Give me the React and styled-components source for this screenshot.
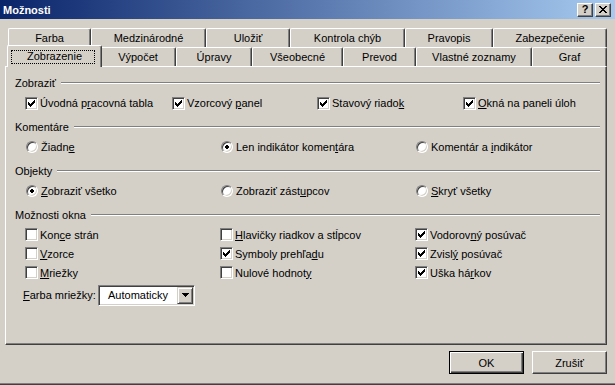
import styled, { createGlobalStyle } from "styled-components";

const GlobalStyle = createGlobalStyle`
  html, body {
    margin: 0;
    padding: 0;
    background: #d4d0c8;
  }
  body {
    font-family: "Liberation Sans", Arial, sans-serif;
    font-size: 11px;
    color: #000;
  }
`;

const Window = styled.div`
  box-sizing: border-box;
  width: 615px;
  height: 385px;
  background: #d4d0c8;
  border-bottom: 1px solid #404040;
  box-shadow: inset 0 -1px #808080;
  display: flex;
  flex-direction: column;
`;

const TitleBar = styled.div`
  height: 19px;
  flex: none;
  display: flex;
  align-items: center;
  padding: 0 4px 0 3px;
  background: linear-gradient(to right, #0a246a, #a6caf0);
  color: #fff;
  font-weight: bold;
  font-size: 11px;
`;

const TitleButtons = styled.div`
  margin-left: auto;
  display: flex;
  gap: 2px;
`;

const TitleButton = styled.div`
  box-sizing: border-box;
  width: 16px;
  height: 14px;
  background: #d4d0c8;
  border: 1px solid;
  border-color: #fff #404040 #404040 #fff;
  box-shadow: inset -1px -1px #808080;
  color: #000;
  font-weight: bold;
  font-size: 11px;
  line-height: 11px;
  display: flex;
  align-items: center;
  justify-content: center;
`;

const PixelSvg = styled.svg`
  display: block;
  flex: none;
`;

const TabStrip = styled.div`
  margin: 9px 0 0 8px;
  width: 599px;
`;

const TabRow = styled.div`
  display: flex;
  height: 19px;
  padding-left: ${(p) => p.$indent || 0}px;
`;

const Tab = styled.div`
  box-sizing: border-box;
  position: relative;
  flex: none;
  width: ${(p) => p.$w + (p.$active ? 4 : 0)}px;
  height: ${(p) => (p.$active ? 22 : 19)}px;
  margin: ${(p) => (p.$active ? "-2px -2px 0" : "0")};
  z-index: ${(p) => (p.$active ? 1 : 0)};
  background: #d4d0c8;
  border-top: 1px solid #fff;
  border-left: 1px solid #fff;
  border-right: 1px solid #404040;
  border-radius: 2px 2px 0 0;
  box-shadow: inset -1px 0 #808080;
  display: flex;
  align-items: center;
  justify-content: center;
  padding-bottom: ${(p) => (p.$active ? 2 : 1)}px;
`;

const FocusRing = styled.span`
  position: absolute;
  top: 4px;
  bottom: 3px;
  left: 3px;
  right: 6px;
  border: 1px dotted #000;
`;

const Panel = styled.div`
  box-sizing: border-box;
  margin-left: 5px;
  width: 602px;
  height: 279px;
  flex: none;
  border: 1px solid;
  border-color: #fff #404040 #404040 #fff;
  box-shadow: inset -1px -1px #808080;
  padding: 6px 6px 0 9px;
`;

const Section = styled.div`
  margin-bottom: 4px;
`;

const GroupHeader = styled.div`
  display: flex;
  align-items: center;
  gap: 5px;
  height: 20px;
`;

const EtchedLine = styled.div`
  flex: 1;
  height: 0;
  border-top: 1px solid #808080;
  border-bottom: 1px solid #fff;
`;

const OptionRow = styled.div`
  display: grid;
  grid-template-columns: ${(p) => p.$cols};
  align-items: center;
  height: ${(p) => p.$h || 20}px;
  padding-left: 10px;
`;

const Option = styled.label`
  display: flex;
  align-items: center;
  gap: 2px;
  white-space: nowrap;
`;

const CheckBox = styled.span`
  box-sizing: border-box;
  width: 13px;
  height: 13px;
  flex: none;
  background: #fff;
  border: 1px solid;
  border-color: #808080 #fff #fff #808080;
  box-shadow: inset 1px 1px #404040, inset -1px -1px #d4d0c8;
  display: flex;
  align-items: center;
  justify-content: center;
`;

const RadioCircle = styled.span`
  box-sizing: border-box;
  width: 12px;
  height: 12px;
  flex: none;
  margin: 0 1px 0 1px;
  border-radius: 50%;
  background: #fff;
  border: 1px solid;
  border-color: #808080 #fff #fff #808080;
  box-shadow: inset 1px 1px #404040, inset -1px -1px #d4d0c8;
  display: flex;
  align-items: center;
  justify-content: center;
`;

const Key = styled.u`
  text-decoration-thickness: 1px;
  text-underline-offset: 1px;
`;

const ComboRow = styled.div`
  display: flex;
  align-items: center;
  height: 22px;
  margin-top: 2px;
  padding-left: 8px;
`;

const ComboLabel = styled.span`
  width: 75px;
  flex: none;
`;

const Combo = styled.div`
  box-sizing: border-box;
  width: 97px;
  height: 21px;
  background: #fff;
  border: 1px solid;
  border-color: #808080 #fff #fff #808080;
  box-shadow: inset 1px 1px #404040, inset -1px -1px #d4d0c8;
  padding: 1px;
  display: flex;
  align-items: stretch;
`;

const ComboText = styled.span`
  flex: 1;
  display: flex;
  align-items: center;
  padding-left: 8px;
`;

const ComboButton = styled.span`
  box-sizing: border-box;
  width: 16px;
  background: #d4d0c8;
  border: 1px solid;
  border-color: #d4d0c8 #404040 #404040 #d4d0c8;
  box-shadow: inset 1px 1px #fff, inset -1px -1px #808080;
  display: flex;
  align-items: center;
  justify-content: center;
`;

const Footer = styled.div`
  display: flex;
  justify-content: flex-end;
  gap: 8px;
  padding: 6px 8px 0 0;
`;

const Button = styled.button`
  box-sizing: border-box;
  width: 75px;
  height: 23px;
  padding: 0;
  background: #d4d0c8;
  font: inherit;
  color: #000;
  border: 1px solid;
  border-color: ${(p) => (p.$default ? "#000" : "#fff #404040 #404040 #fff")};
  box-shadow: ${(p) =>
    p.$default
      ? "inset 1px 1px #fff, inset -1px -1px #404040, inset -2px -2px #808080"
      : "inset -1px -1px #808080"};
`;

const CHECK = ["......x", ".....xx", "x...xxx", "xx.xxx.", "xxxxx..", ".xxx...", "..x...."];
const DOT = [".xx.", "xxxx", "xxxx", ".xx."];
const ARROW = ["xxxxxxx", ".xxxxx.", "..xxx..", "...x..."];
const CLOSE = ["xx....xx", ".xx..xx.", "..xxxx..", "...xx...", "..xxxx..", ".xx..xx.", "xx....xx"];

function Pixels({ rows }) {
  const w = rows[0].length;
  const h = rows.length;
  return (
    <PixelSvg width={w} height={h} viewBox={`0 0 ${w} ${h}`} shapeRendering="crispEdges">
      {rows.flatMap((r, y) =>
        [...r].map((c, x) =>
          c === "x" ? <rect key={`${x}-${y}`} x={x} y={y} width="1" height="1" fill="#000" /> : null
        )
      )}
    </PixelSvg>
  );
}

function Check({ on, children }) {
  return (
    <Option>
      <CheckBox>{on && <Pixels rows={CHECK} />}</CheckBox>
      <span>{children}</span>
    </Option>
  );
}

function Radio({ on, children }) {
  return (
    <Option>
      <RadioCircle>{on && <Pixels rows={DOT} />}</RadioCircle>
      <span>{children}</span>
    </Option>
  );
}

const row1 = [
  ["Farba", 83],
  ["Medzinárodné", 115],
  ["Uložiť", 84],
  ["Kontrola chýb", 115],
  ["Pravopis", 88],
  ["Zabezpečenie", 114],
];

const row2 = [
  ["Zobrazenie", 91],
  ["Výpočet", 76],
  ["Úpravy", 76],
  ["Všeobecné", 91],
  ["Prevod", 73],
  ["Vlastné zoznamy", 116],
  ["Graf", 75],
];

const COLS3 = "195px 195px auto";

export default function App() {
  return (
    <>
      <GlobalStyle />
      <Window>
        <TitleBar>
          Možnosti
          <TitleButtons>
            <TitleButton>?</TitleButton>
            <TitleButton>
              <Pixels rows={CLOSE} />
            </TitleButton>
          </TitleButtons>
        </TitleBar>

        <TabStrip>
          <TabRow>
            {row1.map(([name, w]) => (
              <Tab key={name} $w={w}>
                {name}
              </Tab>
            ))}
          </TabRow>
          <TabRow $indent={1}>
            {row2.map(([name, w], i) => (
              <Tab key={name} $w={w} $active={i === 0}>
                {name}
                {i === 0 && <FocusRing />}
              </Tab>
            ))}
          </TabRow>
        </TabStrip>

        <Panel>
          <Section>
            <GroupHeader>
              Zobraziť
              <EtchedLine />
            </GroupHeader>
            <OptionRow $cols="147px 145px 146px auto">
              <Check on>
                Úvodná p<Key>r</Key>acovná tabla
              </Check>
              <Check on>
                Vzorcový <Key>p</Key>anel
              </Check>
              <Check on>
                Stavový riado<Key>k</Key>
              </Check>
              <Check on>
                <Key>O</Key>kná na paneli úloh
              </Check>
            </OptionRow>
          </Section>

          <Section>
            <GroupHeader>
              Komentáre
              <EtchedLine />
            </GroupHeader>
            <OptionRow $cols={COLS3}>
              <Radio>
                Žiadn<Key>e</Key>
              </Radio>
              <Radio on>
                Len indikátor komen<Key>t</Key>ára
              </Radio>
              <Radio>
                Komentár a <Key>i</Key>ndikátor
              </Radio>
            </OptionRow>
          </Section>

          <Section>
            <GroupHeader>
              Objekty
              <EtchedLine />
            </GroupHeader>
            <OptionRow $cols={COLS3}>
              <Radio on>
                <Key>Z</Key>obraziť všetko
              </Radio>
              <Radio>
                Zobraziť zást<Key>u</Key>pcov
              </Radio>
              <Radio>
                <Key>S</Key>kryť všetky
              </Radio>
            </OptionRow>
          </Section>

          <Section>
            <GroupHeader>
              Možnosti okna
              <EtchedLine />
            </GroupHeader>
            <OptionRow $cols={COLS3} $h={19}>
              <Check>
                Kon<Key>c</Key>e strán
              </Check>
              <Check>
                <Key>H</Key>lavičky riadkov a stĺpcov
              </Check>
              <Check on>
                Vodorov<Key>n</Key>ý posúvač
              </Check>
            </OptionRow>
            <OptionRow $cols={COLS3} $h={19}>
              <Check>
                <Key>V</Key>zorce
              </Check>
              <Check on>
                Symboly prehľa<Key>d</Key>u
              </Check>
              <Check on>
                Zvisl<Key>ý</Key> posúvač
              </Check>
            </OptionRow>
            <OptionRow $cols={COLS3} $h={19}>
              <Check>
                <Key>M</Key>riežky
              </Check>
              <Check>
                Nulové hodnot<Key>y</Key>
              </Check>
              <Check on>
                Uška há<Key>r</Key>kov
              </Check>
            </OptionRow>
            <ComboRow>
              <ComboLabel>
                <Key>F</Key>arba mriežky:
              </ComboLabel>
              <Combo>
                <ComboText>Automaticky</ComboText>
                <ComboButton>
                  <Pixels rows={ARROW} />
                </ComboButton>
              </Combo>
            </ComboRow>
          </Section>
        </Panel>

        <Footer>
          <Button $default>OK</Button>
          <Button>Zrušiť</Button>
        </Footer>
      </Window>
    </>
  );
}
